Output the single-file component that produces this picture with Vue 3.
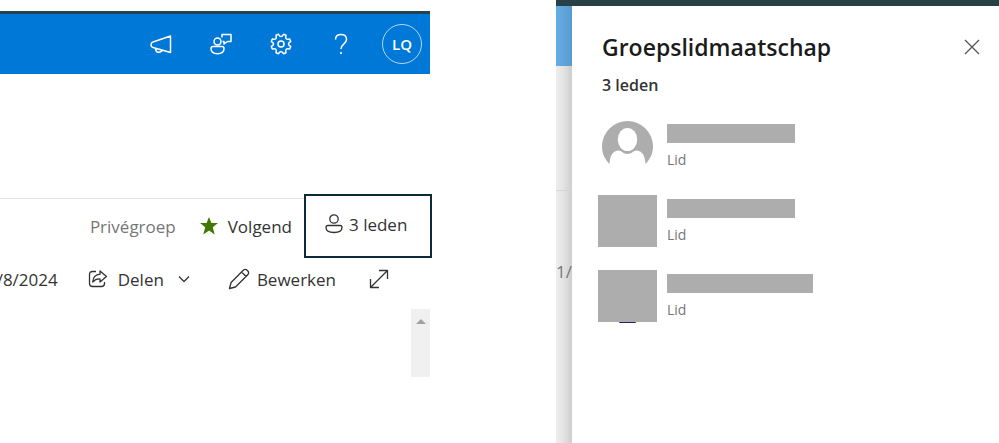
<script setup>
const members = [
  { id: 1, role: 'Lid', photo: false, long: false },
  { id: 2, role: 'Lid', photo: true, long: false },
  { id: 3, role: 'Lid', photo: true, long: true, peek: true },
]
</script>

<template>
  <main class="page">
    <section class="site">
      <header class="suite">
        <button class="tool" type="button" aria-label="Aankondigingen">
          <svg width="24" height="24" viewBox="0 0 24 24">
            <path d="M21.500 4v16.500L4 15.500q-2-.6-2-2.600 0-2.300 2-2.900z M6.500 16.200q0 4 3.200 4 2.800 0 3.300-2.200" />
          </svg>
        </button>
        <button class="tool" type="button" aria-label="Feedback">
          <svg width="24" height="24" viewBox="0 0 24 24">
            <circle cx="8.500" cy="9.500" r="3.500" />
            <path d="M4 14.500h9q2 0 2 2c0 3.500-2.500 5.200-6.500 5.200S2 20 2 16.500q0-2 2-2z M13 5.500V2.500h9v7h-3.500L15 12V9.500H13.500" />
          </svg>
        </button>
        <button class="tool" type="button" aria-label="Instellingen">
          <svg width="24" height="24" viewBox="0 0 24 24">
            <path d="M9.500 2.300Q12 6.800 14.500 2.300L17 3.300Q15.600 8.400 20.700 7l1 2.500Q17.200 12 21.700 14.500l-1 2.500Q15.600 15.600 17 20.700l-2.500 1Q12 17.200 9.500 21.700L7 20.700Q8.400 15.600 3.300 17l-1-2.500Q6.800 12 2.300 9.500L3.300 7Q8.400 8.400 7 3.300z" />
            <circle cx="12" cy="12" r="3" />
          </svg>
        </button>
        <button class="tool" type="button" aria-label="Help">
          <svg width="24" height="24" viewBox="0 0 24 24">
            <path d="M6.500 7.500C6.500 4.200 8.700 2.500 12 2.500s5.500 1.800 5.500 4.900c0 4.400-5.500 4.600-5.500 9.600" />
            <circle class="dot" cx="12" cy="21" r="1.100" />
          </svg>
        </button>
        <button class="account" type="button">LQ</button>
      </header>

      <div class="group">
        <span class="kind">Privégroep</span>
        <button class="follow" type="button">
          <svg class="star" width="18" height="18" viewBox="0 0 18 18">
            <path d="M9 0l2.400 6H18l-5.200 4.300L14.700 17.500 9 13.500 3.300 17.500l1.900-7.200L0 6h6.600z" />
          </svg>
          Volgend
        </button>
        <button class="count" type="button">
          <svg width="18" height="20" viewBox="0 0 18 20">
            <circle cx="9" cy="5" r="4.200" />
            <path d="M3 11.500h12q2 0 2 2c0 3.300-3.500 5-8 5s-8-1.700-8-5q0-2 2-2z" />
          </svg>
          3 leden
        </button>
      </div>

      <div class="commands">
        <span class="date">/8/2024</span>
        <button class="share" type="button">
          <svg width="20" height="20" viewBox="0 0 20 20">
            <path d="M8 2.500H4.500q-3 0-3 3v9q0 3 3 3h9q3 0 3-3V13 M12 2l6.500 5.500L12 13v-3.200q-4.500-.3-7.300 3.200Q5.200 5.800 12 5.200z" />
          </svg>
          Delen
          <svg class="chevron" width="12" height="8" viewBox="0 0 12 8"><path d="M1 1.500l5 5 5-5" /></svg>
        </button>
        <button class="edit" type="button">
          <svg width="22" height="22" viewBox="0 0 22 22">
            <path d="M1.500 20.500l1.600-6L15.500 2q1.800-1.500 3.900.4t.6 4.100L7.500 19z M13.500 4l4.600 4.500" />
          </svg>
          Bewerken
        </button>
        <button class="expand" type="button" aria-label="Uitvouwen">
          <svg width="20" height="20" viewBox="0 0 20 20">
            <path d="M1.500 18.500l17-17 M10 1.500h8.500V10 M1.500 10v8.500H10" />
          </svg>
        </button>
      </div>

      <div class="track">
        <svg width="10" height="6" viewBox="0 0 10 6"><path d="M0 6l5-5 5 5z" /></svg>
      </div>
    </section>

    <section class="overlay">
      <div class="browser-edge"></div>
      <div class="body">
        <div class="behind">
          <div class="behind-bar"></div>
          <div class="behind-head"></div>
          <span class="behind-date">1/</span>
        </div>
        <aside class="panel">
          <div class="panel-head">
            <h1>Groepslidmaatschap</h1>
            <button class="close" type="button" aria-label="Sluiten">
              <svg width="16" height="16" viewBox="0 0 16 16"><path d="M1 1l14 14M15 1L1 15" /></svg>
            </button>
          </div>
          <h2>3 leden</h2>
          <ul>
            <li v-for="m in members" :key="m.id">
              <div v-if="m.photo" class="photo" :class="{ peek: m.peek }"></div>
              <svg v-else class="persona" width="51" height="51" viewBox="0 0 51 51">
                <path d="M7.500 43C3 38.500 0 32.500 0 25.500a25.500 25.500 0 0 1 51 0c0 7-3 13-7.500 17.500-.5-8-3-13-8.500-13.500-3.500-.3-5 3.500-9.500 3.500s-6-3.800-9.500-3.500C10.500 30 8 35 7.500 43z" />
                <ellipse cx="25.500" cy="18.500" rx="9.700" ry="11.500" />
              </svg>
              <div class="info">
                <div class="name" :class="{ long: m.long }"></div>
                <span class="role">{{ m.role }}</span>
              </div>
            </li>
          </ul>
        </aside>
      </div>
    </section>
  </main>
</template>

<style>
body {
  margin: 0;
  background: #fff;
}
</style>

<style scoped>
.page {
  display: grid;
  grid-template-columns: minmax(0, 432fr) minmax(0, 124fr) minmax(0, 443fr);
  min-height: 100vh;
  overflow: hidden;
  font-family: "Segoe UI", "Open Sans", "Noto Sans", sans-serif;
  color: #333;
}
button {
  display: flex;
  flex: none;
  align-items: center;
  padding: 0;
  border: 0;
  background: none;
  color: inherit;
  font: inherit;
  white-space: nowrap;
}
svg {
  flex: none;
  fill: none;
  stroke: currentColor;
  stroke-width: 1.300;
  stroke-linejoin: round;
}
.site {
  grid-column: 1;
  display: flex;
  flex-direction: column;
  padding-top: 11px;
  font-size: 17px;
}
.suite {
  display: flex;
  justify-content: flex-end;
  align-items: center;
  height: 60px;
  margin-right: 2px;
  padding-right: 8px;
  border-top: 3px solid #24444d;
  background: #0078d7;
  color: #fff;
}
.suite svg {
  stroke-width: 1.500;
}
.tool {
  justify-content: center;
  width: 60px;
  height: 60px;
}
.suite .dot {
  fill: currentColor;
  stroke: none;
}
.account {
  box-sizing: border-box;
  justify-content: center;
  width: 40px;
  height: 40px;
  margin-left: 11px;
  border: 1px solid #b5d7f3;
  border-radius: 50%;
  font-size: 15px;
  font-weight: 600;
}
.group {
  box-sizing: border-box;
  display: flex;
  justify-content: flex-end;
  align-items: center;
  height: 61px;
  margin-top: 124px;
  padding-bottom: 6px;
  border-top: 1px solid #e5e5e5;
}
.kind {
  margin-right: 24px;
  color: #767676;
}
.follow {
  gap: 10px;
  margin-right: 12px;
}
.star {
  fill: #407800;
  stroke: none;
}
.count {
  box-sizing: border-box;
  gap: 6px;
  width: 128px;
  height: 64px;
  padding: 0 0 4px 19px;
  border: 2px solid #0b2a3a;
  background: #fff;
}
.commands {
  display: flex;
  justify-content: flex-end;
  align-items: center;
  height: 40px;
  padding-right: 43px;
}
.date {
  margin-right: 30px;
}
.share {
  gap: 10px;
  margin-right: 38px;
}
.chevron {
  margin-left: 4px;
}
.edit {
  gap: 7px;
  margin-right: 33px;
}
.track {
  box-sizing: border-box;
  display: flex;
  justify-content: center;
  align-self: flex-end;
  width: 19px;
  height: 68px;
  margin: 10px 2px 0 0;
  padding-top: 9px;
  background: #f0f0f0;
}
.track svg {
  fill: #a0a0a0;
  stroke: none;
}
.overlay {
  grid-column: 3;
  display: flex;
  flex-direction: column;
}
.browser-edge {
  height: 6px;
  background: #284147;
}
.body {
  display: flex;
  flex: 1;
}
.behind {
  width: 16px;
  background: linear-gradient(90deg, #eee, #e2e2e2 50%, #cdcdcd);
  color: #777;
  font-size: 17px;
}
.behind-bar {
  height: 60px;
  background: linear-gradient(90deg, #65ade5, #5a9bcf);
}
.behind-head {
  height: 124px;
  border-bottom: 1px solid #d6d6d6;
}
.behind-date {
  display: block;
  padding-top: 69px;
}
.panel {
  flex: 1;
  padding: 24px 19px 0 26px;
}
.panel-head {
  display: flex;
  justify-content: space-between;
  align-items: center;
  height: 34px;
  padding-left: 4px;
}
h1,
h2,
ul {
  margin: 0;
  padding: 0;
}
h1 {
  color: #1b1b1b;
  font-size: 23px;
  font-weight: 600;
}
.close {
  color: #555;
}
h2 {
  padding: 9px 0 0 4px;
  font-size: 16px;
  font-weight: 600;
  line-height: 24px;
}
ul {
  padding-top: 23px;
  list-style: none;
}
li {
  display: flex;
  gap: 10px;
  height: 75px;
}
.persona {
  margin: 1px 4px 0;
  fill: #adadad;
  stroke: none;
}
.persona ellipse {
  fill: #fff;
}
.photo {
  width: 59px;
  height: 52px;
  background: #adadad;
}
.peek {
  position: relative;
}
.peek::after {
  content: "";
  position: absolute;
  top: 100%;
  left: 21px;
  width: 17px;
  height: 1px;
  border-radius: 0 0 8px 8px;
  background: #29235c;
}
.info {
  padding-top: 4px;
}
.name {
  width: 128px;
  height: 19px;
  background: #adadad;
}
.long {
  width: 146px;
}
.role {
  display: block;
  padding-top: 7px;
  color: #767676;
  font-size: 14px;
  line-height: 20px;
}
</style>
